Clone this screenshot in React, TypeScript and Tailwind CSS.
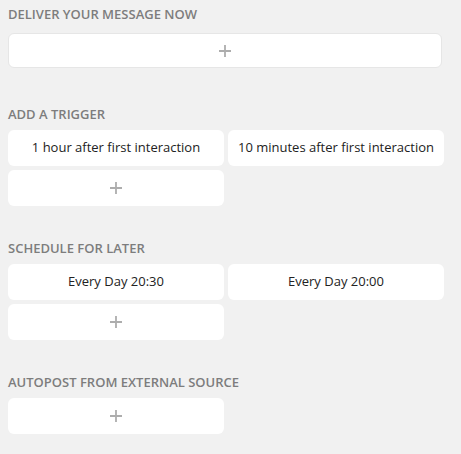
const Plus = () => (
  <svg width="12" height="12" viewBox="0 0 12 12" className="block">
    <path d="M6 0v12M0 6h12" stroke="#adadad" strokeWidth="1.8" />
  </svg>
);

function AddCard({ wide = false }: { wide?: boolean }) {
  return (
    <div
      className={`flex items-center justify-center bg-white rounded-md ${
        wide ? "w-[434px] h-[35px] border border-[#e6e6e6]" : "w-[216px] h-[36px]"
      }`}
    >
      <Plus />
    </div>
  );
}

function ItemCard({ label }: { label: string }) {
  return (
    <div className="flex items-center justify-center bg-white rounded-md h-[36px] text-[13px] text-[#222]">
      {label}
    </div>
  );
}

function Heading({ children }: { children: string }) {
  return (
    <h2 className="text-[13px] leading-4 font-semibold uppercase text-[#7d7d7d] mb-2">
      {children}
    </h2>
  );
}

export default function App() {
  return (
    <div
      className="w-[461px] h-[454px] bg-[#f1f1f1] px-2 pt-[6px]"
      style={{ fontFamily: '"Open Sans", "Liberation Sans", sans-serif' }}
    >
      {/* Deliver now */}
      <section>
        <h2 className="text-[13px] leading-4 font-semibold uppercase text-[#7d7d7d] mb-[11px]">
          Deliver your message now
        </h2>
        <AddCard wide />
      </section>

      {/* Triggers */}
      <section className="mt-[38px]">
        <Heading>Add a trigger</Heading>
        <div className="grid grid-cols-[216px_216px] gap-1">
          <ItemCard label="1 hour after first interaction" />
          <ItemCard label="10 minutes after first interaction" />
          <AddCard />
        </div>
      </section>

      {/* Schedule */}
      <section className="mt-[34px]">
        <Heading>Schedule for later</Heading>
        <div className="grid grid-cols-[216px_216px] gap-1">
          <ItemCard label="Every Day 20:30" />
          <ItemCard label="Every Day 20:00" />
          <AddCard />
        </div>
      </section>

      {/* Autopost */}
      <section className="mt-[34px]">
        <Heading>Autopost from external source</Heading>
        <AddCard />
      </section>
    </div>
  );
}
